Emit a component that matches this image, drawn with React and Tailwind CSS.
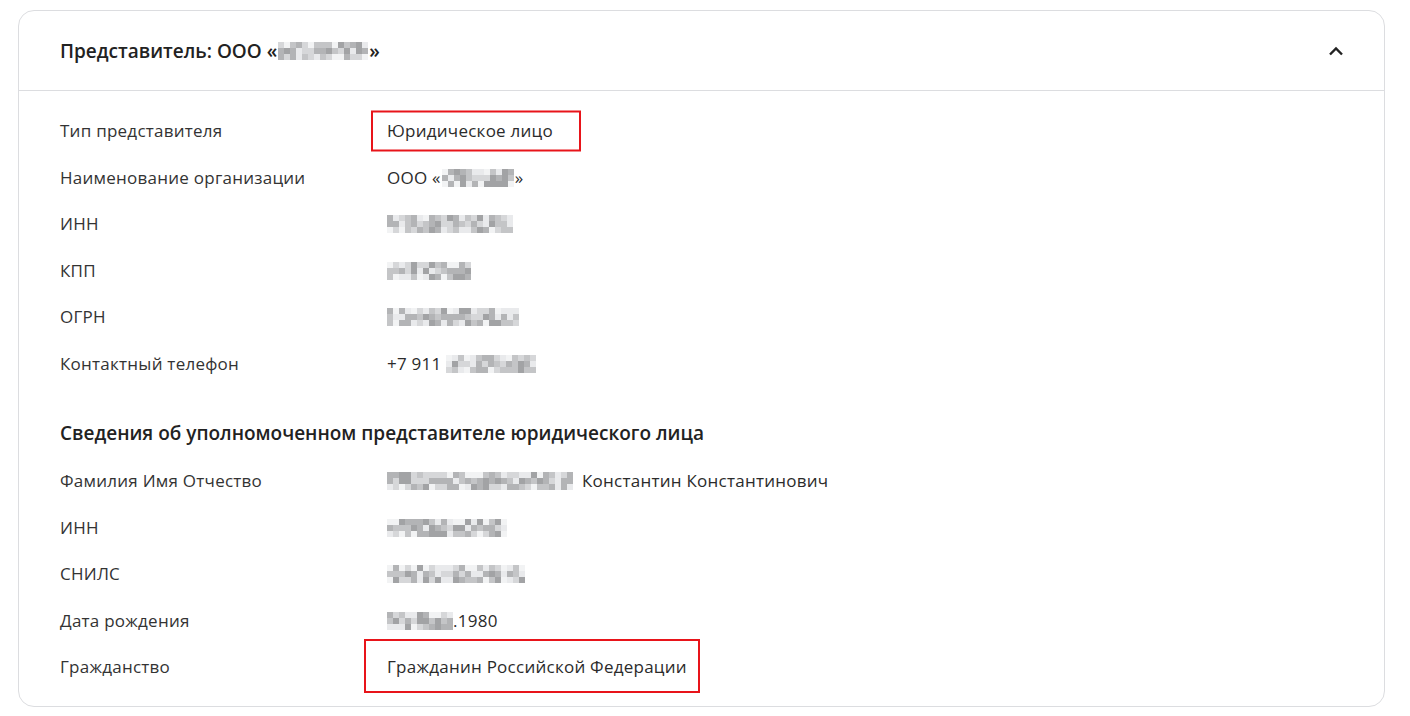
import React from 'react'

const shades = [
  'bg-[#e9eaec]',
  'bg-[#d6d7d9]',
  'bg-[#c4c5c7]',
  'bg-[#b3b4b6]',
  'bg-[#a2a3a5]',
  'bg-[#f2f3f4]',
]

// pixelated placeholder for hidden data
const Blur = ({ w, seed = 1, className = '' }) => {
  const cols = Math.round(w / 6)
  const cells = []
  let s = seed * 9301 + 49297
  for (let i = 0; i < cols * 3; i++) {
    s = (s * 9301 + 49297) % 233280
    const r = s / 233280
    const row = Math.floor(i / cols)
    let idx = Math.floor(r * shades.length)
    if (row === 1 && idx === 5) idx = 3
    cells.push(<span key={i} className={`block w-[6px] h-[6px] ${shades[idx]}`} />)
  }
  return (
    <span
      className={`inline-grid align-middle ${className}`}
      style={{ gridTemplateColumns: `repeat(${cols}, 6px)` }}
    >
      {cells}
    </span>
  )
}

const Row = ({ label, children, mark }) => (
  <div className="grid grid-cols-[327px_1fr] h-[46.5px] items-center tracking-[0.25px]">
    <div className="text-[#333]">{label}</div>
    <div className="relative flex items-center h-full">
      {children}
      {mark === 1 && (
        <span className="absolute left-[-16px] top-1/2 -translate-y-1/2 w-[210px] h-[41px] border-2 border-[#e8141a]" />
      )}
      {mark === 2 && (
        <span className="absolute left-[-23px] top-1/2 -translate-y-1/2 mt-[-1px] w-[336px] h-[54px] border-2 border-[#e8141a]" />
      )}
    </div>
  </div>
)

const App = () => {
  return (
    <div
      className="w-[1410px] h-[716px] bg-white pt-[10px] pl-[18px] pr-[25px] text-[17px] leading-[24px] text-[#2b2b2b]"
      style={{ fontFamily: '"Open Sans", "Noto Sans", sans-serif' }}
    >
      <div className="border border-[#dcdde0] rounded-[16px] h-[697px]">
        <div className="h-[80px] flex items-center justify-between pl-[41px] pr-[40px] border-b border-[#dcdde0]">
          <div className="text-[19px] font-semibold text-[#222] flex items-center">
            <span>Представитель: ООО «</span>
            <Blur w={90} seed={3} className="mx-[1px]" />
            <span>»</span>
          </div>
          <svg width="16" height="10" viewBox="0 0 16 10" fill="none">
            <path d="M2 8.5L8 2.5L14 8.5" stroke="#222" strokeWidth="2.4" />
          </svg>
        </div>
        <div className="pl-[41px] pr-[40px] pt-[17px]">
          <Row label="Тип представителя" mark={1}>
            <span>Юридическое лицо</span>
          </Row>
          <Row label="Наименование организации">
            <span>ООО «</span>
            <Blur w={72} seed={5} className="mx-[1px]" />
            <span>»</span>
          </Row>
          <Row label="ИНН">
            <Blur w={126} seed={7} />
          </Row>
          <Row label="КПП">
            <Blur w={84} seed={11} />
          </Row>
          <Row label="ОГРН">
            <Blur w={132} seed={13} />
          </Row>
          <Row label="Контактный телефон">
            <span className="whitespace-pre">+7 911 </span>
            <Blur w={90} seed={17} />
          </Row>
          <div className="mt-[34px] mb-[13px] h-[24px] text-[19px] font-semibold text-[#222] flex items-center">
            Сведения об уполномоченном представителе юридического лица
          </div>
          <Row label="Фамилия Имя Отчество">
            <Blur w={186} seed={19} />
            <span className="ml-[9px]">Константин Константинович</span>
          </Row>
          <Row label="ИНН">
            <Blur w={120} seed={23} />
          </Row>
          <Row label="СНИЛС">
            <Blur w={138} seed={29} />
          </Row>
          <Row label="Дата рождения">
            <Blur w={66} seed={31} />
            <span>.1980</span>
          </Row>
          <Row label="Гражданство" mark={2}>
            <span>Гражданин Российской Федерации</span>
          </Row>
        </div>
      </div>
    </div>
  )
}

export default App
